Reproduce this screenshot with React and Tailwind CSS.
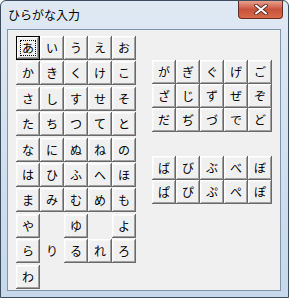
const left = [
  ['あ', 'い', 'う', 'え', 'お'],
  ['か', 'き', 'く', 'け', 'こ'],
  ['さ', 'し', 'す', 'せ', 'そ'],
  ['た', 'ち', 'つ', 'て', 'と'],
  ['な', 'に', 'ぬ', 'ね', 'の'],
  ['は', 'ひ', 'ふ', 'へ', 'ほ'],
  ['ま', 'み', 'む', 'め', 'も'],
  ['や', '', 'ゆ', '', 'よ'],
  ['ら', 'り', 'る', 'れ', 'ろ'],
  ['わ', '', '', '', ''],
]

const dakuten = [
  ['が', 'ぎ', 'ぐ', 'げ', 'ご'],
  ['ざ', 'じ', 'ず', 'ぜ', 'ぞ'],
  ['だ', 'ぢ', 'づ', 'で', 'ど'],
]

const handakuten = [
  ['ば', 'び', 'ぶ', 'べ', 'ぼ'],
  ['ぱ', 'ぴ', 'ぷ', 'ぺ', 'ぽ'],
]

function Key({ ch, isDefault, flat }) {
  if (!ch) return <div className="w-[24px] h-[24px]" />
  if (flat) {
    return (
      <div className="w-[24px] h-[24px] flex items-center justify-center text-[12px] text-black">
        {ch}
      </div>
    )
  }
  if (isDefault) {
    return (
      <div className="w-[24px] h-[24px] border border-black bg-[#f0f0f0] shadow-[inset_-1px_-1px_0_#696969,inset_1px_1px_0_#ffffff,inset_-2px_-2px_0_#a0a0a0] p-[3px]">
        <div className="w-full h-full border border-dotted border-black flex items-center justify-center text-[12px] text-black leading-none">
          {ch}
        </div>
      </div>
    )
  }
  return (
    <div className="w-[24px] h-[24px] bg-[#f0f0f0] shadow-[inset_-1px_-1px_0_#696969,inset_1px_1px_0_#ffffff,inset_-2px_-2px_0_#a0a0a0,inset_2px_2px_0_#f8f8f8] flex items-center justify-center text-[12px] text-black">
      {ch}
    </div>
  )
}

function Grid({ rows, first }) {
  return (
    <div className="grid grid-cols-[repeat(5,24px)]">
      {rows.flat().map((ch, i) => (
        <Key key={i} ch={ch} isDefault={first && i === 0} flat={first && ch === 'り'} />
      ))}
    </div>
  )
}

export default function App() {
  return (
    <div
      className="w-[289px] h-[298px] border border-[#3e4d5e] rounded-t-[6px] bg-gradient-to-b from-[#dfe9f4] to-[#c6d8eb] flex flex-col"
      style={{ fontFamily: '"Noto Sans CJK JP", "Noto Sans", sans-serif' }}
    >
      {/* Title bar */}
      <div className="h-[28px] flex justify-between pl-[7px] pr-[5px]">
        <span className="text-[12px] text-black pt-[5px] leading-[18px]">ひらがな入力</span>
        <div className="w-[45px] h-[18px] rounded-b-[4px] border border-t-0 border-[#6d2a22] bg-gradient-to-b from-[#e8a090] via-[#c8523c] to-[#d86a4a] flex items-center justify-center">
          <svg width="14" height="11" viewBox="0 0 14 11">
            <path d="M2 1.5 L12 9.5 M12 1.5 L2 9.5" stroke="#5a2a22" strokeWidth="3.6" strokeLinecap="round" />
            <path d="M2 1.5 L12 9.5 M12 1.5 L2 9.5" stroke="#ffffff" strokeWidth="2" strokeLinecap="round" />
          </svg>
        </div>
      </div>

      {/* Client */}
      <div className="ml-[6px] w-[274px] h-[262px] border border-[#8094aa] bg-[#f0f0f0] pl-[8px] pt-[6px] flex gap-[16px]">
        <Grid rows={left} first />
        <div className="flex flex-col pt-[24px] gap-[24px]">
          <Grid rows={dakuten} />
          <Grid rows={handakuten} />
        </div>
      </div>
    </div>
  )
}
